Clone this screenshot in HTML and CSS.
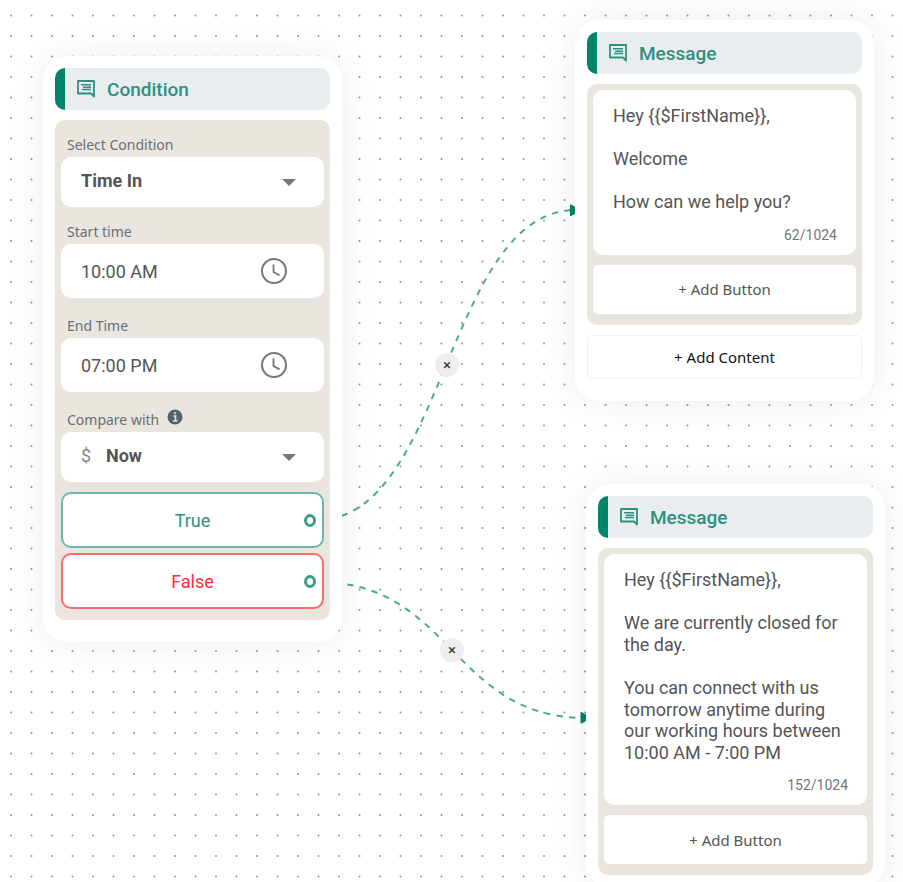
FILE: index.html
```
<!DOCTYPE html>
<html lang="en">
	<head>
		<meta charset="utf-8">
		<title>Chat Flow Builder</title>
		<link rel="stylesheet" href="styles.css">
	</head>
	<body>
		<!-- shared icons -->
		<svg class="sprite" aria-hidden="true">
			<symbol id="iconMessage" viewBox="0 0 18 18">
				<path d="M1 1h16v15.500l-3-3H1z" fill="none" stroke="currentColor" stroke-width="1.800" stroke-linejoin="round"/>
				<path d="M4 4.800h10M6 7.200h8M5 9.600h9" fill="none" stroke="currentColor" stroke-width="1.500"/>
			</symbol>
			<symbol id="iconClock" viewBox="0 0 26 26">
				<circle cx="13" cy="13" r="12" fill="none" stroke="currentColor" stroke-width="2"/>
				<path d="M12.500 6.500v7.500l6 3.400" fill="none" stroke="currentColor" stroke-width="1.800"/>
			</symbol>
			<symbol id="iconCaret" viewBox="0 0 14 7">
				<path d="M0 0h14L7 7z" fill="currentColor"/>
			</symbol>
		</svg>

		<main class="canvas">
			<svg class="wires" aria-hidden="true">
				<defs>
					<pattern id="dots" x="1" y="5" width="41" height="41" patternUnits="userSpaceOnUse">
						<g fill="#7d9c9c">
							<circle cx="10" cy="10.500" r="1"/>
							<circle cx="30.500" cy="10.500" r="1"/>
							<circle cx="10" cy="31" r="1"/>
							<circle cx="30.500" cy="31" r="1"/>
						</g>
					</pattern>
				</defs>
				<rect x="-10" width="110%" height="100%" fill="url(#dots)"/>
			</svg>

			<svg class="wires front" aria-hidden="true">
				<path class="wire" d="M317 520C446 520 446 210 576 210"/>
				<path class="wire" stroke-dashoffset="-4" d="M318 582C452 582 452 718 586 718"/>
				<path class="arrow" d="M570 204.500q1.500 -.5 6 3v5.500q-4.500 3.500 -6 3z"/>
				<path class="arrow" d="M580.500 712q1.500 -.5 6 3v5.500q-4.500 3.500 -6 3z"/>
			</svg>
			<button class="cut cutTrue" aria-label="Remove true connection">×</button>
			<button class="cut cutFalse" aria-label="Remove false connection">×</button>

			<section class="node conditionNode">
				<header>
					<svg><use href="#iconMessage"/></svg>
					<h2>Condition</h2>
				</header>
				<div class="nodeBody">
					<label for="condition">Select Condition</label>
					<div class="field">
						<select id="condition"><option>Time In</option></select>
						<svg class="caret"><use href="#iconCaret"/></svg>
					</div>
					<label for="startTime">Start time</label>
					<div class="field timeField">
						<input type="text" id="startTime" value="10:00 AM">
						<button aria-label="Pick start time"><svg><use href="#iconClock"/></svg></button>
					</div>
					<label for="endTime">End Time</label>
					<div class="field timeField">
						<input type="text" id="endTime" value="07:00 PM">
						<button aria-label="Pick end time"><svg><use href="#iconClock"/></svg></button>
					</div>
					<label for="compare">Compare with
						<svg class="info" viewBox="0 0 16 16">
							<circle cx="8" cy="8" r="7.500" fill="#51636d"/>
							<path d="M6.500 7h2v5M6 12h4.500M7 4h2" fill="none" stroke="#e9e5df" stroke-width="1.600"/>
						</svg>
					</label>
					<div class="field">
						<span class="prefix">$</span>
						<select id="compare"><option>Now</option></select>
						<svg class="caret"><use href="#iconCaret"/></svg>
					</div>
					<button class="branch true">True<span class="port"></span></button>
					<button class="branch false">False<span class="port"></span></button>
				</div>
			</section>

			<section class="node welcomeNode">
				<header>
					<svg><use href="#iconMessage"/></svg>
					<h2>Message</h2>
				</header>
				<div class="nodeBody">
					<div class="message">
						<textarea rows="5" aria-label="Welcome message">Hey {{$FirstName}},

Welcome

How can we help you?</textarea>
						<span class="counter">62/1024</span>
					</div>
					<button class="addButton">+ Add Button</button>
				</div>
				<button class="addContent">+ Add Content</button>
			</section>

			<section class="node closedNode">
				<header>
					<svg><use href="#iconMessage"/></svg>
					<h2>Message</h2>
				</header>
				<div class="nodeBody">
					<div class="message">
						<textarea rows="9" aria-label="Closed message">Hey {{$FirstName}},

We are currently closed for the day.

You can connect with us tomorrow anytime during our working hours between 10:00 AM - 7:00 PM</textarea>
						<span class="counter">152/1024</span>
					</div>
					<button class="addButton">+ Add Button</button>
				</div>
			</section>
		</main>
	</body>
</html>
```

FILE: styles.css
```
* {
	box-sizing: border-box;
}

body {
	margin: 0;
	font-family: Roboto, "Liberation Sans", sans-serif;
	font-size: 18px;
	color: #555;
	background-color: #fff;
}

button, input, select, textarea {
	font: inherit;
	color: inherit;
	margin: 0;
	padding: 0;
	border: 0;
	background: none;
	outline: none;
}

button {
	cursor: pointer;
}

.sprite {
	position: absolute;
	width: 0;
	height: 0;
}

.canvas {
	position: relative;
	min-height: 100vh;
	overflow: hidden;
}

/* connections */
.wires {
	position: absolute;
	top: 0;
	left: 0;
	width: 100%;
	height: 100%;
}

.wires.front {
	z-index: 1;
	pointer-events: none;
}

.wire {
	fill: none;
	stroke: #4fa896;
	stroke-width: 2;
	stroke-dasharray: 6.3;
}

.arrow {
	fill: #00846a;
}

.cut {
	position: absolute;
	z-index: 3;
	width: 24px;
	height: 24px;
	border-radius: 50%;
	background-color: #eee;
	color: #333;
	font-size: 15px;
	line-height: 24px;
}

.cutTrue {
	left: 435px;
	top: 353px;
}

.cutFalse {
	left: 440px;
	top: 638px;
}

/* nodes */
.node {
	position: absolute;
	z-index: 2;
	width: 299px;
	padding: 12px;
	border-radius: 24px;
	background-color: #fff;
	box-shadow: 0 0 36px rgba(0,0,0,0.08);
}

.conditionNode {
	left: 43px;
	top: 56px;
	padding-bottom: 22px;
}

.welcomeNode {
	left: 575px;
	top: 20px;
	padding-bottom: 22px;
}

.closedNode {
	left: 586px;
	top: 484px;
}

.node header {
	display: flex;
	align-items: center;
	gap: 12px;
	height: 42px;
	padding-left: 12px;
	border-left: 10px solid #00846a;
	border-radius: 10px;
	background-color: #e9edf0;
	color: #2d917e;
}

.node header svg {
	width: 18px;
	height: 18px;
}

.node h2 {
	margin: 0;
	font-size: 19px;
	font-weight: 500;
}

.nodeBody {
	display: flex;
	flex-direction: column;
	margin-top: 10px;
	padding: 6px 6px 11px;
	border-radius: 10px;
	background-color: #eae5df;
}

.nodeBody label {
	display: flex;
	align-items: center;
	gap: 8px;
	height: 20px;
	margin: 14px 6px 3px;
	font-family: "Noto Sans", sans-serif;
	font-size: 14px;
	color: #667077;
}

.nodeBody label:first-child {
	margin-top: 8px;
}

.nodeBody .timeField + label {
	margin-top: 17px;
}

.info {
	width: 16px;
	height: 16px;
	margin-bottom: 4px;
}

.field {
	display: flex;
	align-items: center;
	height: 50px;
	padding: 0 28px 0 20px;
	border-radius: 10px;
	background-color: #fff;
}

.field select {
	flex: 1;
	appearance: none;
	padding-bottom: 3px;
	font-weight: 700;
}

.caret {
	width: 14px;
	height: 7px;
	color: #777;
}

.timeField {
	height: 54px;
	padding-right: 37px;
}

.timeField input {
	flex: 1;
	min-width: 0;
}

.timeField button, .timeField svg {
	display: block;
	width: 26px;
	height: 26px;
	color: #777;
}

.prefix {
	width: 25px;
	padding-bottom: 3px;
	color: #888;
}

.branch {
	position: relative;
	height: 56px;
	margin-top: 10px;
	border: 2px solid #6db8a9;
	border-radius: 10px;
	background-color: #fff;
	color: #2d917e;
}

.branch.false {
	margin-top: 5px;
	border-color: #ff6b6b;
	color: #ff2a3f;
}

.port {
	position: absolute;
	right: 6px;
	top: 20px;
	width: 12px;
	height: 13px;
	border: 3px solid #3d9c8b;
	border-radius: 50%;
}

.message {
	display: flex;
	flex-direction: column;
	padding: 15px 19px 12px 20px;
	border-radius: 10px;
	background-color: #fff;
}

.message textarea {
	line-height: 1.2;
	resize: none;
	overflow: hidden;
}

.counter {
	margin-top: 14px;
	align-self: flex-end;
	font-size: 14px;
	line-height: 16px;
	color: #777;
}

.addButton, .addContent {
	font-family: "Noto Sans", sans-serif;
	font-size: 15px;
	background-color: #fff;
}

.addButton {
	height: 49px;
	margin-top: 10px;
	border-radius: 5px;
}

.addContent {
	width: 100%;
	height: 44px;
	margin-top: 10px;
	border: 1px solid #eef2f2;
	border-radius: 5px;
	color: #111;
}
```
